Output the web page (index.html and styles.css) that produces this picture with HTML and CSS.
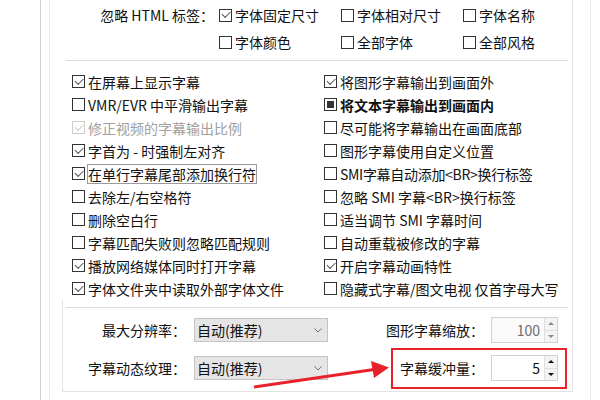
FILE: index.html
```html
<!DOCTYPE html>
<html lang="zh-CN">
<head>
  <meta charset="UTF-8">
  <meta name="viewport" content="width=device-width, initial-scale=1.0">
  <title>字幕设置</title>
  <link rel="stylesheet" href="styles.css">
</head>
<body>
  <div class="window">
    <div class="inner">
      <div class="panel">
        <section class="tags">
          <div class="tags-label">忽略 HTML 标签：</div>
          <div class="tags-grid">
            <div class="check on"><span class="box"></span>字体固定尺寸</div>
            <div class="check"><span class="box"></span>字体相对尺寸</div>
            <div class="check"><span class="box"></span>字体名称</div>
            <div class="check"><span class="box"></span>字体颜色</div>
            <div class="check"><span class="box"></span>全部字体</div>
            <div class="check"><span class="box"></span>全部风格</div>
          </div>
        </section>
        <hr class="sep">
        <section class="options">
          <div class="check on"><span class="box"></span>在屏幕上显示字幕</div>
          <div class="check on"><span class="box"></span>将图形字幕输出到画面外</div>
          <div class="check"><span class="box"></span>VMR/EVR 中平滑输出字幕</div>
          <div class="check mixed"><span class="box"></span>将文本字幕输出到画面内</div>
          <div class="check on disabled"><span class="box"></span>修正视频的字幕输出比例</div>
          <div class="check"><span class="box"></span>尽可能将字幕输出在画面底部</div>
          <div class="check on"><span class="box"></span>字首为 - 时强制左对齐</div>
          <div class="check"><span class="box"></span>图形字幕使用自定义位置</div>
          <div class="check on"><span class="box"></span><span class="focus">在单行字幕尾部添加换行符</span></div>
          <div class="check"><span class="box"></span><span class="narrow">SMI字幕自动添加&lt;BR&gt;换行标签</span></div>
          <div class="check"><span class="box"></span>去除左/右空格符</div>
          <div class="check"><span class="box"></span>忽略 SMI 字幕&lt;BR&gt;换行标签</div>
          <div class="check"><span class="box"></span>删除空白行</div>
          <div class="check"><span class="box"></span>适当调节 SMI 字幕时间</div>
          <div class="check"><span class="box"></span>字幕匹配失败则忽略匹配规则</div>
          <div class="check"><span class="box"></span>自动重载被修改的字幕</div>
          <div class="check on"><span class="box"></span>播放网络媒体同时打开字幕</div>
          <div class="check on"><span class="box"></span>开启字幕动画特性</div>
          <div class="check on"><span class="box"></span>字体文件夹中读取外部字体文件</div>
          <div class="check"><span class="box"></span>隐藏式字幕/图文电视 仅首字母大写</div>
        </section>
        <section class="lower">
          <hr class="sep">
          <div class="field-row first">
            <div class="field-label">最大分辨率：</div>
            <div class="select">自动(推荐)
              <svg class="chevron" width="8" height="5" viewBox="0 0 8 5"><polyline points="0.5,0.5 4,4 7.5,0.5" fill="none" stroke="#707070"/></svg>
            </div>
            <div class="spin-label">图形字幕缩放：</div>
            <div class="spin disabled">
              <div class="val">100</div>
              <div class="btns"><span class="up"></span><span class="down"></span></div>
            </div>
          </div>
          <div class="field-row">
            <div class="field-label">字幕动态纹理：</div>
            <div class="select">自动(推荐)
              <svg class="chevron" width="8" height="5" viewBox="0 0 8 5"><polyline points="0.5,0.5 4,4 7.5,0.5" fill="none" stroke="#707070"/></svg>
            </div>
            <div class="spin-label">字幕缓冲量：</div>
            <div class="spin">
              <div class="val">5</div>
              <div class="btns"><span class="up"></span><span class="down"></span></div>
            </div>
          </div>
        </section>
      </div>
    </div>
  </div>

  <!-- 标注：红框和箭头 -->
  <svg class="annot" width="600" height="400" viewBox="0 0 600 400">
    <rect x="392" y="349" width="174" height="39" fill="none" stroke="#e8212a" stroke-width="2"/>
    <line x1="254" y1="387" x2="374" y2="369.5" stroke="#e8212a" stroke-width="3"/>
    <polygon points="389,367.5 371,361 374,378" fill="#e8212a"/>
  </svg>
</body>
</html>
```

FILE: styles.css
```css
body {
  margin: 0;
  width: 600px;
  height: 400px;
  overflow: hidden;
  background: #fff;
  color: #111;
  font-family: "Noto Sans CJK SC", "Microsoft YaHei", sans-serif;
  font-size: 14px;
}
.window {
  box-sizing: border-box;
  margin-left: 40px;
  width: 551px;
  height: 400px;
  padding-left: 8px;
  border-left: 1px solid #d2d2d2;
  border-right: 1px solid #ececec;
}
.inner {
  height: 100%;
  padding-left: 12px;
  border-left: 1px solid #ebebeb;
}
.panel {
  box-sizing: border-box;
  width: 511px;
  height: 392px;
  border-right: 1px solid #e2e2e2;
  border-bottom: 1px solid #e2e2e2;
}
.sep {
  height: 0;
  margin: 6px 4px 0 4px;
  border: none;
  border-top: 1px solid #dadada;
}
/* 复选框 */
.check {
  display: flex;
  align-items: center;
  white-space: nowrap;
}
.box {
  position: relative;
  box-sizing: border-box;
  flex: none;
  width: 13px;
  height: 13px;
  margin-right: 3px;
  border: 1px solid #333;
  background: #fff;
}
.on .box::after {
  content: "";
  position: absolute;
  left: 2px;
  top: 1.5px;
  width: 7px;
  height: 3.5px;
  border-left: 1px solid #555;
  border-bottom: 1px solid #555;
  transform: rotate(-45deg);
}
.mixed .box::after {
  content: "";
  position: absolute;
  left: 2px;
  top: 2px;
  width: 7px;
  height: 7px;
  background: #333;
}
.mixed {
  font-weight: bold;
}
.disabled {
  color: #a0a0a0;
}
.disabled .box {
  border-color: #cccccc;
}
.disabled .box::after {
  border-color: #cccccc;
}
.focus {
  outline: 1px solid #9a9a9a;
  line-height: 18px;
}
.narrow {
  letter-spacing: -0.3px;
}
/* 顶部 HTML 标签 */
.tags {
  display: flex;
  padding: 3px 0 0 10px;
}
.tags-label {
  flex: none;
  width: 142px;
  margin-right: 5px;
  height: 24px;
  line-height: 24px;
  text-align: right;
}
.tags-grid {
  display: grid;
  grid-template-columns: 122px 122px auto;
  grid-auto-rows: 24px;
  row-gap: 3px;
}
/* 中间选项 */
.options {
  display: grid;
  grid-template-columns: 252px 1fr;
  grid-auto-rows: 23px;
  margin-top: 9px;
  padding-left: 10px;
}
/* 底部 */
.lower {
  padding-top: 7px;
  border-left: 1px solid #e2e2e2;
  height: 91px;
  box-sizing: border-box;
}
.lower .sep {
  margin: 0 4px 0 3px;
}
.field-row {
  display: flex;
  align-items: center;
  height: 26px;
  margin-top: 12px;
}
.field-row.first {
  margin-top: 9px;
}
.field-label {
  width: 123px;
  text-align: right;
  margin-right: 8px;
}
.select {
  box-sizing: border-box;
  display: flex;
  align-items: center;
  width: 134px;
  height: 24px;
  padding-left: 2px;
  border: 1px solid #c4c4c4;
  background: #e5e5e5;
}
.chevron {
  margin-left: auto;
  margin-right: 5px;
}
.spin-label {
  margin-left: auto;
  width: 98px;
  text-align: right;
  margin-right: 7px;
}
.spin {
  box-sizing: border-box;
  display: flex;
  width: 67px;
  height: 26px;
  margin-right: 14px;
  border: 1px solid #d0d0d0;
  background: #fff;
}
.spin .val {
  flex: 1;
  text-align: right;
  padding-right: 4px;
  line-height: 24px;
}
.spin.disabled {
  background: #fafafa;
  color: #6d6d6d;
}
.btns {
  display: flex;
  flex-direction: column;
  width: 12px;
  border-left: 1px solid #e0e0e0;
  background: #f4f4f4;
}
.btns span {
  flex: 1;
  display: flex;
  align-items: center;
  justify-content: center;
}
.btns .up {
  border-bottom: 1px solid #e0e0e0;
}
.btns .up::before {
  content: "";
  border-left: 3px solid transparent;
  border-right: 3px solid transparent;
  border-bottom: 3px solid #111;
}
.btns .down::before {
  content: "";
  border-left: 3px solid transparent;
  border-right: 3px solid transparent;
  border-top: 3px solid #111;
}
.spin.disabled .up::before {
  border-bottom-color: #8a8a8a;
}
.spin.disabled .down::before {
  border-top-color: #8a8a8a;
}
/* 标注层 */
.annot {
  position: absolute;
  left: 0;
  top: 0;
  pointer-events: none;
}
```
